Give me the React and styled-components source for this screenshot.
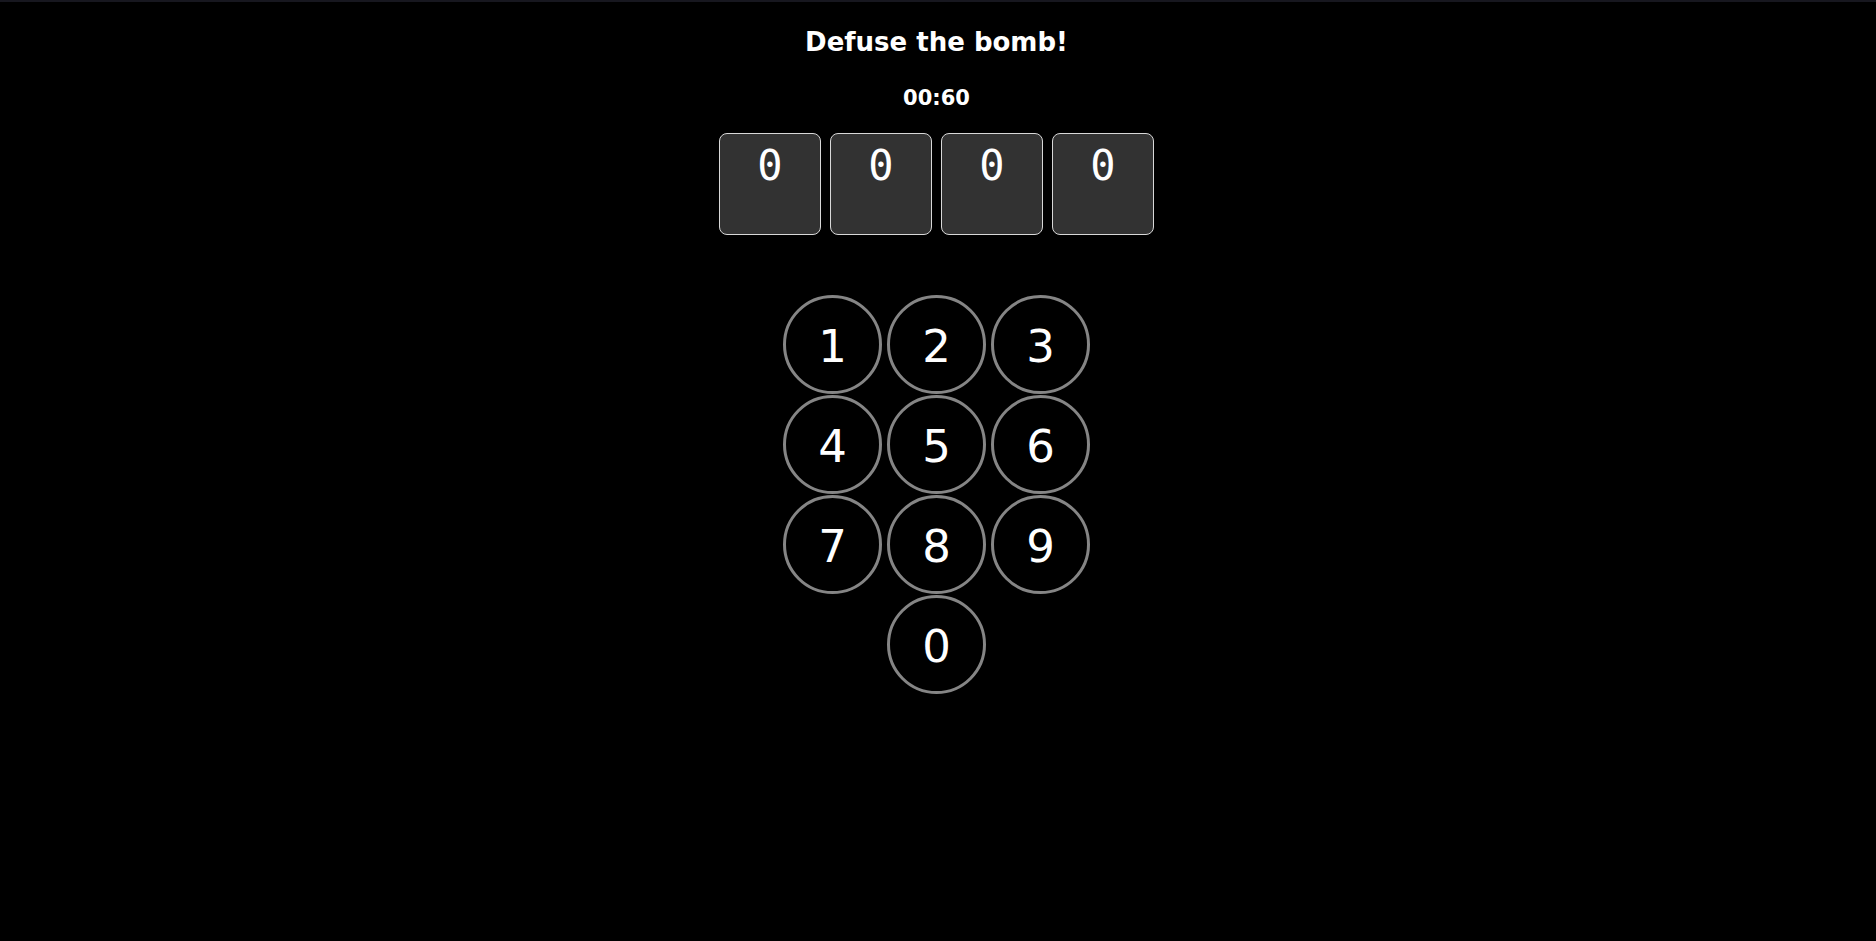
import React, { useState } from "react"
import styled, { createGlobalStyle } from "styled-components"

const GlobalStyle = createGlobalStyle`
  html, body {
    margin: 0;
    padding: 0;
    background: #000;
  }
  body {
    border-top: 2px solid #17171f;
    font-family: "DejaVu Sans", "Liberation Sans", sans-serif;
    color: #fff;
  }
`;

const Page = styled.main`
  display: flex;
  flex-direction: column;
  align-items: center;
  padding-right: 3px;
  min-height: 939px;
`;

const Title = styled.h1`
  margin: 24px 0 0;
  font-size: 26px;
  line-height: 32px;
  font-weight: bold;
`;

const Timer = styled.div`
  margin-top: 28px;
  font-size: 21px;
  line-height: 24px;
  font-weight: bold;
`;

const Slots = styled.div`
  display: flex;
  gap: 9px;
  margin-top: 23px;
`;

const Slot = styled.div`
  box-sizing: border-box;
  width: 102px;
  height: 102px;
  padding-top: 7px;
  border: 1px solid #d8d8d8;
  border-radius: 8px;
  background: #323232;
  text-align: center;
  font-family: "DejaVu Sans Mono", "Liberation Mono", monospace;
  font-size: 42px;
`;

const Keypad = styled.div`
  display: grid;
  grid-template-columns: repeat(3, 99px);
  column-gap: 5px;
  row-gap: 1px;
  margin-top: 60px;
`;

// the 0 key sits under the middle column
const Key = styled.button`
  box-sizing: border-box;
  width: 99px;
  height: 99px;
  grid-column: ${props => props.col || "auto"};
  border: 3px solid #858585;
  border-radius: 50%;
  background: #000;
  color: #fff;
  font-family: "DejaVu Sans", sans-serif;
  font-size: 45px;
  padding: 4px 0 0;
  display: flex;
  align-items: center;
  justify-content: center;
  cursor: pointer;
`;

export default function App() {
  const [code, setCode] = useState([0, 0, 0, 0])
  const keys = [1, 2, 3, 4, 5, 6, 7, 8, 9]

  const press = n => setCode(c => [...c.slice(1), n])

  return (
    <>
      <GlobalStyle />
      <Page>
        <Title>Defuse the bomb!</Title>
        <Timer>00:60</Timer>
        <Slots>
          {code.map((d, i) => (
            <Slot key={i}>{d}</Slot>
          ))}
        </Slots>
        <Keypad>
          {keys.map(k => (
            <Key key={k} onClick={() => press(k)}>{k}</Key>
          ))}
          <Key col={2} onClick={() => press(0)}>0</Key>
        </Keypad>
      </Page>
    </>
  )
}
